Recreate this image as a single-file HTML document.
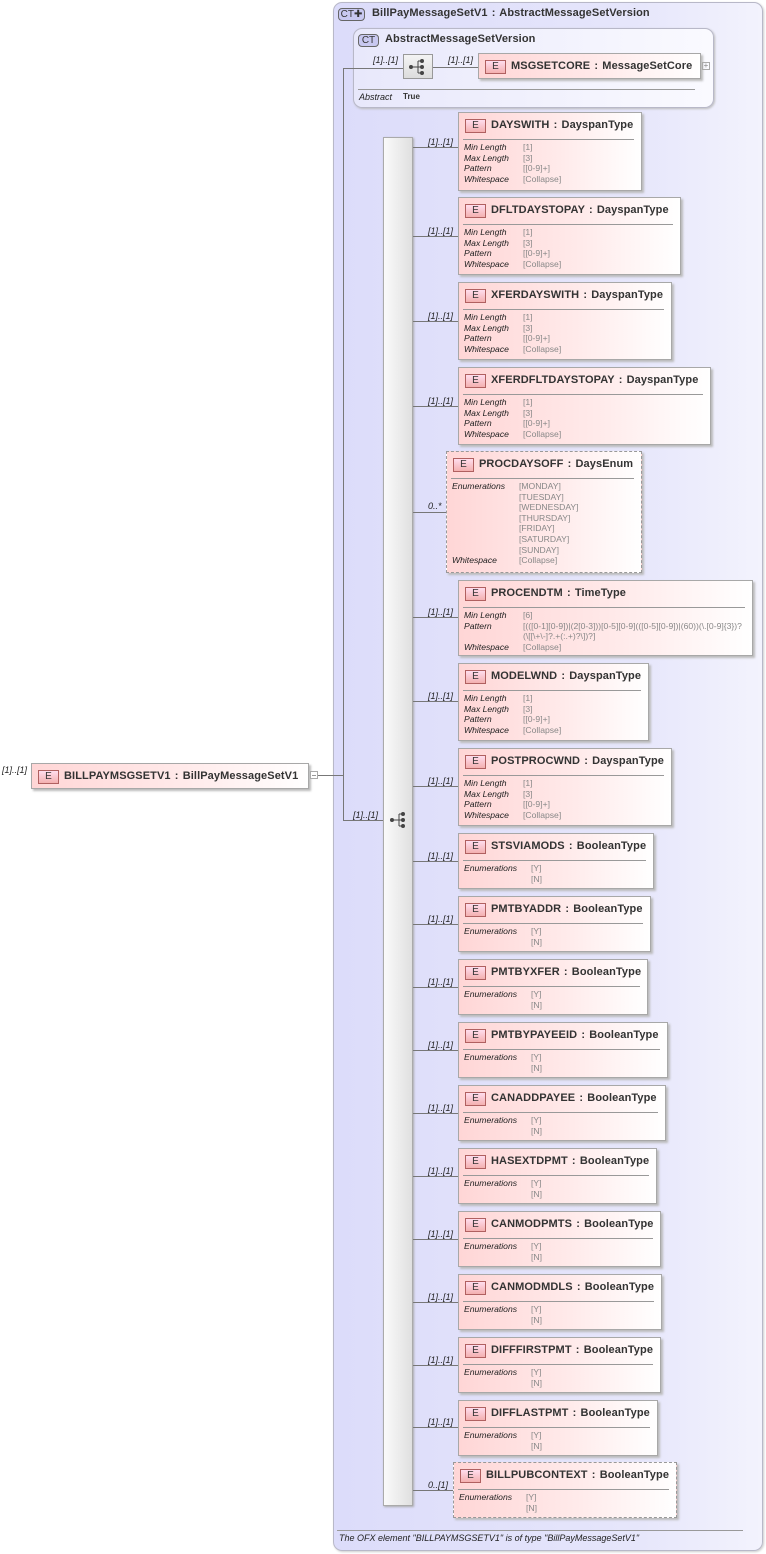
<!DOCTYPE html>
<html><head><meta charset="utf-8"><style>
*{margin:0;padding:0;box-sizing:border-box}
body{width:766px;height:1554px;background:#fff;position:relative;font-family:"Liberation Sans",Arial,sans-serif;overflow:hidden}
.a{position:absolute}
.ct{left:333px;top:2px;width:430px;height:1549px;border:1px solid #b8b8c8;border-radius:9px;background:linear-gradient(90deg,#dcdcfa,#e6e6fb 70%,#f3f3fd);box-shadow:1px 1px 2px #ccc}
.abs{left:353px;top:28px;width:361px;height:80px;border:1px solid #b8b8c8;border-radius:9px;background:linear-gradient(90deg,#e8e8fb,#fafaff);box-shadow:1px 1px 2px #bbb}
.badge{position:absolute;font-size:10px;color:#333;border:1px solid #666;border-radius:4px;background:#c8c8f0;text-align:center;line-height:11px}
.t{font-size:11px;font-weight:bold;color:#333;white-space:nowrap;letter-spacing:0.1px;word-spacing:1px}
.e{position:absolute;border:1px solid #a8a8a8;background:linear-gradient(90deg,#ffd6d6,#ffeaea 55%,#fff);box-shadow:2px 2px 2px #bbb}
.e.d{border:1px dashed #999}
.eb{position:absolute;left:6px;top:6px;width:21px;height:14px;border:1px solid #b06060;background:linear-gradient(#fde,#f4b0b0);font-size:10px;line-height:12px;text-align:center;color:#333}
.e .t{position:absolute;left:32px;top:6px}
.sep{position:absolute;left:4px;right:7px;top:26px;border-top:1px solid #999}
.pr{position:absolute;left:5px;top:29px;font-size:8.6px;line-height:10.6px;white-space:nowrap}
.pr div{display:flex}
.pr i{color:#222;display:inline-block}
.pr span{color:#888}
.l{position:absolute;background:#777}
.lb{position:absolute;font-size:9px;font-style:italic;color:#222;white-space:nowrap}
.seq{left:383px;top:137px;width:30px;height:1369px;background:linear-gradient(90deg,#fafafa,#e0e0e0);border:1px solid #aaa;box-shadow:1px 1px 2px #aaa}
</style></head><body>

<div class="a ct"></div>
<div class="badge" style="left:338px;top:8px;width:27px;height:13px">CT✚</div>
<div class="a t" style="left:372px;top:7px">BillPayMessageSetV1 : AbstractMessageSetVersion</div>

<div class="a abs"></div>
<div class="badge" style="left:358px;top:34px;width:21px;height:13px">CT</div>
<div class="a t" style="left:385px;top:33px">AbstractMessageSetVersion</div>
<div class="a" style="left:403px;top:54px;width:30px;height:25px;background:linear-gradient(#f4f4f4,#ddd);border:1px solid #999"></div>
<svg class="a" style="left:408px;top:58px" width="20" height="18"><circle cx="3" cy="9" r="2" fill="#444"/><path d="M5 9h5M10 3v12M10 3h4M10 9h4M10 15h4" stroke="#444" fill="none"/><circle cx="14" cy="3" r="2" fill="#444"/><circle cx="14" cy="9" r="2" fill="#444"/><circle cx="14" cy="15" r="2" fill="#444"/></svg>
<div class="lb" style="left:373px;top:55px">[1]..[1]</div>
<div class="lb" style="left:448px;top:55px">[1]..[1]</div>
<div class="l" style="left:433px;top:67px;width:45px;height:1px"></div>
<div class="e" style="left:478px;top:53px;width:223px;height:26px"><div class="eb">E</div><div class="t">MSGSETCORE : MessageSetCore</div></div>
<div class="a" style="left:702px;top:62px;width:8px;height:8px;border:1px solid #aaa;font-size:8px;line-height:6px;text-align:center;color:#888">+</div>
<div class="l" style="left:358px;top:89px;width:337px;height:1px;background:#999"></div>
<div class="lb" style="left:359px;top:92px">Abstract</div>
<div class="a" style="left:403px;top:92px;font-size:8px;font-weight:bold;color:#333">True</div>

<div class="l" style="left:343px;top:68px;width:60px;height:1px"></div>
<div class="l" style="left:343px;top:68px;width:1px;height:753px"></div>
<div class="l" style="left:343px;top:820px;width:40px;height:1px"></div>
<div class="lb" style="left:353px;top:810px">[1]..[1]</div>

<div class="lb" style="left:2px;top:765px">[1]..[1]</div>
<div class="e" style="left:31px;top:763px;width:278px;height:26px"><div class="eb">E</div><div class="t">BILLPAYMSGSETV1 : BillPayMessageSetV1</div></div>
<div class="a" style="left:310px;top:771px;width:8px;height:8px;border:1px solid #aaa;background:#fff"><div style="margin:3px 1px;border-top:1px solid #999"></div></div>
<div class="l" style="left:318px;top:775px;width:25px;height:1px"></div>

<div class="a seq"></div>
<svg class="a" style="left:389px;top:811px" width="20" height="18"><circle cx="3" cy="9" r="2" fill="#444"/><path d="M5 9h5M10 3v12M10 3h4M10 9h4M10 15h4" stroke="#444" fill="none"/><circle cx="14" cy="3" r="2" fill="#444"/><circle cx="14" cy="9" r="2" fill="#444"/><circle cx="14" cy="15" r="2" fill="#444"/></svg>

<div class="l" style="left:413px;top:147px;width:45px;height:1px"></div><div class="lb" style="left:428px;top:137px">[1]..[1]</div>
<div class="l" style="left:413px;top:236px;width:45px;height:1px"></div><div class="lb" style="left:428px;top:226px">[1]..[1]</div>
<div class="l" style="left:413px;top:321px;width:45px;height:1px"></div><div class="lb" style="left:428px;top:311px">[1]..[1]</div>
<div class="l" style="left:413px;top:406px;width:45px;height:1px"></div><div class="lb" style="left:428px;top:396px">[1]..[1]</div>
<div class="l" style="left:413px;top:512px;width:33px;height:1px"></div><div class="lb" style="left:428px;top:501px">0..*</div>
<div class="l" style="left:413px;top:617px;width:45px;height:1px"></div><div class="lb" style="left:428px;top:607px">[1]..[1]</div>
<div class="l" style="left:413px;top:701px;width:45px;height:1px"></div><div class="lb" style="left:428px;top:691px">[1]..[1]</div>
<div class="l" style="left:413px;top:786px;width:45px;height:1px"></div><div class="lb" style="left:428px;top:776px">[1]..[1]</div>
<div class="l" style="left:413px;top:861px;width:45px;height:1px"></div><div class="lb" style="left:428px;top:851px">[1]..[1]</div>
<div class="l" style="left:413px;top:924px;width:45px;height:1px"></div><div class="lb" style="left:428px;top:914px">[1]..[1]</div>
<div class="l" style="left:413px;top:987px;width:45px;height:1px"></div><div class="lb" style="left:428px;top:977px">[1]..[1]</div>
<div class="l" style="left:413px;top:1050px;width:45px;height:1px"></div><div class="lb" style="left:428px;top:1040px">[1]..[1]</div>
<div class="l" style="left:413px;top:1113px;width:45px;height:1px"></div><div class="lb" style="left:428px;top:1103px">[1]..[1]</div>
<div class="l" style="left:413px;top:1176px;width:45px;height:1px"></div><div class="lb" style="left:428px;top:1166px">[1]..[1]</div>
<div class="l" style="left:413px;top:1239px;width:45px;height:1px"></div><div class="lb" style="left:428px;top:1229px">[1]..[1]</div>
<div class="l" style="left:413px;top:1302px;width:45px;height:1px"></div><div class="lb" style="left:428px;top:1292px">[1]..[1]</div>
<div class="l" style="left:413px;top:1365px;width:45px;height:1px"></div><div class="lb" style="left:428px;top:1355px">[1]..[1]</div>
<div class="l" style="left:413px;top:1427px;width:45px;height:1px"></div><div class="lb" style="left:428px;top:1417px">[1]..[1]</div>
<div class="l" style="left:413px;top:1490px;width:40px;height:1px"></div><div class="lb" style="left:428px;top:1480px">0..[1]</div>

<div class="e" style="left:458px;top:112px;width:184px;height:79px"><div class="eb">E</div><div class="t">DAYSWITH : DayspanType</div><div class="sep"></div>
<div class="pr"><div><i style="width:59px">Min Length</i><span>[1]</span></div><div><i style="width:59px">Max Length</i><span>[3]</span></div><div><i style="width:59px">Pattern</i><span>[[0-9]+]</span></div><div><i style="width:59px">Whitespace</i><span>[Collapse]</span></div></div></div>

<div class="e" style="left:458px;top:197px;width:223px;height:78px"><div class="eb">E</div><div class="t">DFLTDAYSTOPAY : DayspanType</div><div class="sep"></div>
<div class="pr"><div><i style="width:59px">Min Length</i><span>[1]</span></div><div><i style="width:59px">Max Length</i><span>[3]</span></div><div><i style="width:59px">Pattern</i><span>[[0-9]+]</span></div><div><i style="width:59px">Whitespace</i><span>[Collapse]</span></div></div></div>

<div class="e" style="left:458px;top:282px;width:214px;height:78px"><div class="eb">E</div><div class="t">XFERDAYSWITH : DayspanType</div><div class="sep"></div>
<div class="pr"><div><i style="width:59px">Min Length</i><span>[1]</span></div><div><i style="width:59px">Max Length</i><span>[3]</span></div><div><i style="width:59px">Pattern</i><span>[[0-9]+]</span></div><div><i style="width:59px">Whitespace</i><span>[Collapse]</span></div></div></div>

<div class="e" style="left:458px;top:367px;width:253px;height:78px"><div class="eb">E</div><div class="t">XFERDFLTDAYSTOPAY : DayspanType</div><div class="sep"></div>
<div class="pr"><div><i style="width:59px">Min Length</i><span>[1]</span></div><div><i style="width:59px">Max Length</i><span>[3]</span></div><div><i style="width:59px">Pattern</i><span>[[0-9]+]</span></div><div><i style="width:59px">Whitespace</i><span>[Collapse]</span></div></div></div>

<div class="e d" style="left:446px;top:451px;width:196px;height:122px"><div class="eb">E</div><div class="t">PROCDAYSOFF : DaysEnum</div><div class="sep"></div>
<div class="pr"><div><i style="width:67px">Enumerations</i><span>[MONDAY]</span></div><div><i style="width:67px"></i><span>[TUESDAY]</span></div><div><i style="width:67px"></i><span>[WEDNESDAY]</span></div><div><i style="width:67px"></i><span>[THURSDAY]</span></div><div><i style="width:67px"></i><span>[FRIDAY]</span></div><div><i style="width:67px"></i><span>[SATURDAY]</span></div><div><i style="width:67px"></i><span>[SUNDAY]</span></div><div><i style="width:67px">Whitespace</i><span>[Collapse]</span></div></div></div>

<div class="e" style="left:458px;top:580px;width:295px;height:76px"><div class="eb">E</div><div class="t">PROCENDTM : TimeType</div><div class="sep"></div>
<div class="pr"><div><i style="width:59px">Min Length</i><span>[6]</span></div><div><i style="width:59px">Pattern</i><span>[(([0-1][0-9])|(2[0-3]))[0-5][0-9](([0-5][0-9])|(60))(\.[0-9]{3})?</span></div><div><i style="width:59px"></i><span>(\[[\+\-]?.+(:.+)?\])?]</span></div><div><i style="width:59px">Whitespace</i><span>[Collapse]</span></div></div></div>

<div class="e" style="left:458px;top:663px;width:191px;height:78px"><div class="eb">E</div><div class="t">MODELWND : DayspanType</div><div class="sep"></div>
<div class="pr"><div><i style="width:59px">Min Length</i><span>[1]</span></div><div><i style="width:59px">Max Length</i><span>[3]</span></div><div><i style="width:59px">Pattern</i><span>[[0-9]+]</span></div><div><i style="width:59px">Whitespace</i><span>[Collapse]</span></div></div></div>

<div class="e" style="left:458px;top:748px;width:214px;height:78px"><div class="eb">E</div><div class="t">POSTPROCWND : DayspanType</div><div class="sep"></div>
<div class="pr"><div><i style="width:59px">Min Length</i><span>[1]</span></div><div><i style="width:59px">Max Length</i><span>[3]</span></div><div><i style="width:59px">Pattern</i><span>[[0-9]+]</span></div><div><i style="width:59px">Whitespace</i><span>[Collapse]</span></div></div></div>

<div class="e" style="left:458px;top:833px;width:196px;height:56px"><div class="eb">E</div><div class="t">STSVIAMODS : BooleanType</div><div class="sep"></div>
<div class="pr"><div><i style="width:67px">Enumerations</i><span>[Y]</span></div><div><i style="width:67px"></i><span>[N]</span></div></div></div>

<div class="e" style="left:458px;top:896px;width:193px;height:56px"><div class="eb">E</div><div class="t">PMTBYADDR : BooleanType</div><div class="sep"></div>
<div class="pr"><div><i style="width:67px">Enumerations</i><span>[Y]</span></div><div><i style="width:67px"></i><span>[N]</span></div></div></div>

<div class="e" style="left:458px;top:959px;width:190px;height:56px"><div class="eb">E</div><div class="t">PMTBYXFER : BooleanType</div><div class="sep"></div>
<div class="pr"><div><i style="width:67px">Enumerations</i><span>[Y]</span></div><div><i style="width:67px"></i><span>[N]</span></div></div></div>

<div class="e" style="left:458px;top:1022px;width:210px;height:56px"><div class="eb">E</div><div class="t">PMTBYPAYEEID : BooleanType</div><div class="sep"></div>
<div class="pr"><div><i style="width:67px">Enumerations</i><span>[Y]</span></div><div><i style="width:67px"></i><span>[N]</span></div></div></div>

<div class="e" style="left:458px;top:1085px;width:208px;height:56px"><div class="eb">E</div><div class="t">CANADDPAYEE : BooleanType</div><div class="sep"></div>
<div class="pr"><div><i style="width:67px">Enumerations</i><span>[Y]</span></div><div><i style="width:67px"></i><span>[N]</span></div></div></div>

<div class="e" style="left:458px;top:1148px;width:199px;height:56px"><div class="eb">E</div><div class="t">HASEXTDPMT : BooleanType</div><div class="sep"></div>
<div class="pr"><div><i style="width:67px">Enumerations</i><span>[Y]</span></div><div><i style="width:67px"></i><span>[N]</span></div></div></div>

<div class="e" style="left:458px;top:1211px;width:203px;height:56px"><div class="eb">E</div><div class="t">CANMODPMTS : BooleanType</div><div class="sep"></div>
<div class="pr"><div><i style="width:67px">Enumerations</i><span>[Y]</span></div><div><i style="width:67px"></i><span>[N]</span></div></div></div>

<div class="e" style="left:458px;top:1274px;width:204px;height:56px"><div class="eb">E</div><div class="t">CANMODMDLS : BooleanType</div><div class="sep"></div>
<div class="pr"><div><i style="width:67px">Enumerations</i><span>[Y]</span></div><div><i style="width:67px"></i><span>[N]</span></div></div></div>

<div class="e" style="left:458px;top:1337px;width:203px;height:56px"><div class="eb">E</div><div class="t">DIFFFIRSTPMT : BooleanType</div><div class="sep"></div>
<div class="pr"><div><i style="width:67px">Enumerations</i><span>[Y]</span></div><div><i style="width:67px"></i><span>[N]</span></div></div></div>

<div class="e" style="left:458px;top:1400px;width:200px;height:56px"><div class="eb">E</div><div class="t">DIFFLASTPMT : BooleanType</div><div class="sep"></div>
<div class="pr"><div><i style="width:67px">Enumerations</i><span>[Y]</span></div><div><i style="width:67px"></i><span>[N]</span></div></div></div>

<div class="e d" style="left:453px;top:1462px;width:224px;height:56px"><div class="eb">E</div><div class="t">BILLPUBCONTEXT : BooleanType</div><div class="sep"></div>
<div class="pr"><div><i style="width:67px">Enumerations</i><span>[Y]</span></div><div><i style="width:67px"></i><span>[N]</span></div></div></div>

<div class="l" style="left:337px;top:1530px;width:406px;height:1px;background:#999"></div>
<div class="lb" style="left:339px;top:1533px">The OFX element "BILLPAYMSGSETV1" is of type "BillPayMessageSetV1"</div>
</body></html>
